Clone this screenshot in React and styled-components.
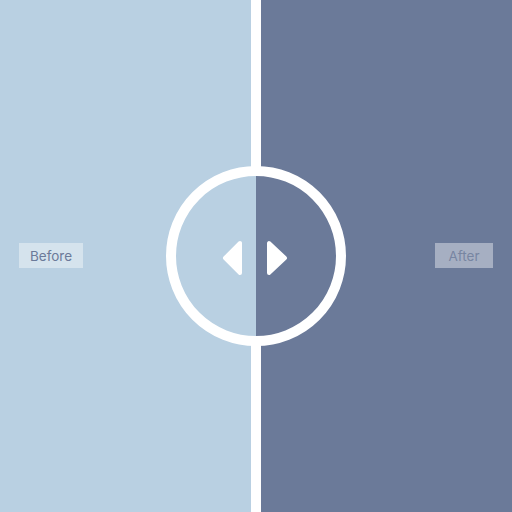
import React from "react";
import styled, { createGlobalStyle } from "styled-components";

const Global = createGlobalStyle`
  html, body { margin: 0; padding: 0; }
  body { font-family: Inter, "Noto Sans", sans-serif; }
`;

export default function App() {
  return <Compare>
    <Global />
    <Pane bg="#b9d0e2">
      <Label tone="light" w={64}>Before</Label>
    </Pane>
    <Pane bg="#6b7a99" right>
      <Label tone="dark" w={58}>After</Label>
    </Pane>
    <Divider />
    <Handle>
      <svg width="80" height="44" viewBox="0 0 80 44">
        <path d="M24 9 L24 39 L9 24 Z" fill="#fff" stroke="#fff" strokeWidth="4" strokeLinejoin="round" />
        <path d="M53 9 L53 39 L69 24 Z" fill="#fff" stroke="#fff" strokeWidth="4" strokeLinejoin="round" />
      </svg>
    </Handle>
  </Compare>;
}

const Compare = styled.div`
  position: relative;
  display: flex;
  width: 512px;
  height: 512px;
  overflow: hidden;
`;

const Pane = styled.div`
  flex: 1;
  display: flex;
  align-items: center;
  justify-content: ${props => props.right ? "flex-end" : "flex-start"};
  padding: 0 19px;
  background-color: ${props => props.bg};
`;

const Label = styled.div`
  width: ${props => props.w}px;
  height: 25px;
  display: flex;
  align-items: center;
  justify-content: center;
  font-size: 13.5px;
  background-color: rgba(255, 255, 255, 0.4);
  color: ${props => props.tone === "light" ? "#6b7a99" : "rgba(107, 122, 153, 0.8)"};
  margin-top: -1px;
`;

const Divider = styled.div`
  position: absolute;
  top: 0;
  bottom: 0;
  left: 251px;
  width: 10px;
  background: #fff;
`;

const Handle = styled.div`
  position: absolute;
  left: 166px;
  top: 166px;
  width: 180px;
  height: 180px;
  box-sizing: border-box;
  border: 10px solid #fff;
  border-radius: 50%;
  background: linear-gradient(to right, #b9d0e2 50%, #6b7a99 50%);
  svg {
    position: absolute;
    left: 40px;
    top: 58px;
  }
`;
